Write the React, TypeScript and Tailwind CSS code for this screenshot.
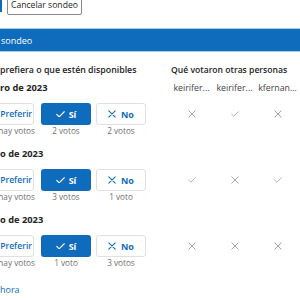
import React from "react";

const Check = ({ className = "", color = "currentColor", w = 10, sw = 1.6 }: { className?: string; color?: string; w?: number; sw?: number }) => (
  <svg width={w} height={w * 0.75} viewBox="0 0 12 9" className={className} fill="none">
    <path d="M1 4.6 L4.2 7.8 L11 1" stroke={color} strokeWidth={sw} strokeLinecap="round" strokeLinejoin="round" />
  </svg>
);

const Cross = ({ className = "", color = "currentColor", w = 9, sw = 1.4 }: { className?: string; color?: string; w?: number; sw?: number }) => (
  <svg width={w} height={w} viewBox="0 0 10 10" className={className} fill="none">
    <path d="M1 1 L9 9 M9 1 L1 9" stroke={color} strokeWidth={sw} strokeLinecap="round" />
  </svg>
);

type Row = {
  date: string;
  votes: [string, string, string];
  others: ("x" | "c")[];
  names?: boolean;
};

const rows: Row[] = [
  { date: "ro de 2023", votes: ["No hay votos", "2 votos", "2 votos"], others: ["x", "c", "x"], names: true },
  { date: "o de 2023", votes: ["No hay votos", "3 votos", "1 voto"], others: ["c", "x", "c"] },
  { date: "o de 2023", votes: ["No hay votos", "1 voto", "3 votos"], others: ["x", "x", "x"] },
];

const names = ["keirifer...", "keirifer...", "kfernan..."];

export default function App() {
  return (
    <div
      className="w-[300px] h-[300px] overflow-hidden bg-white relative"
      style={{ fontFamily: '"Open Sans", "Noto Sans", sans-serif' }}
    >
      {/* top buttons */}
      <div className="flex items-end h-[15px] overflow-hidden">
        <div className="w-[2px] h-[12px] self-start bg-[#0f6cbd]" />
        <div className="ml-[5px] h-[20px] px-[3px] border border-[#8a8a8a] rounded-[2px] flex items-center text-[8.6px] text-[#242424] leading-none">
          Cancelar sondeo
        </div>
      </div>

      {/* blue header */}
      <div className="mt-[13px] h-[24px] border-y border-[#a6cbee] bg-[#0f6cbd] flex items-center">
        <span className="text-white text-[9px] pl-[1px] leading-none">sondeo</span>
      </div>

      {/* headers */}
      <div className="mt-[12px] flex h-[12px] items-center">
        <div className="w-[170px] text-[8.8px] font-semibold text-[#242424] whitespace-nowrap leading-none">
          prefiera o que estén disponibles
        </div>
        <div className="pl-[1px] text-[8.6px] font-semibold text-[#242424] whitespace-nowrap leading-none">
          Qué votaron otras personas
        </div>
      </div>

      <div className="mt-[6px] flex flex-col gap-[11px]">
        {rows.map((r, i) => (
          <div key={i} className="flex flex-col">
            {/* date line */}
            <div className="flex h-[12px] items-center">
              <div className="w-[170px] text-[9.3px] font-bold text-[#242424] leading-none whitespace-nowrap">
                {r.date}
              </div>
              {r.names && (
                <div className="flex">
                  {names.map((n, j) => (
                    <div key={j} className="w-[43px] text-center text-[8.8px] text-[#424242] leading-none whitespace-nowrap">
                      {n}
                    </div>
                  ))}
                </div>
              )}
            </div>
            {/* buttons line */}
            <div className="mt-[9px] flex h-[22px] items-center">
              <div className="w-[170px] flex items-center">
                <div className="ml-[-20px] w-[54px] h-[22px] border border-[#e0e0e0] rounded-[3px] flex items-center justify-end pr-[1px] text-[8.6px] font-semibold text-[#0f6cbd] leading-none">
                  Preferir
                </div>
                <div className="ml-[7px] w-[50px] h-[22px] rounded-[3px] bg-[#0f6cbd] flex items-center justify-center gap-[4px] text-white text-[9px] font-bold leading-none">
                  <Check color="#ffffff" w={9} sw={1.5} />
                  <span>Sí</span>
                </div>
                <div className="ml-[5px] w-[50px] h-[22px] border border-[#e0e0e0] rounded-[3px] flex items-center justify-center gap-[5px] text-[#0f6cbd] text-[9px] font-bold leading-none">
                  <Cross color="#0f6cbd" w={8} sw={1.3} />
                  <span>No</span>
                </div>
              </div>
              <div className="flex">
                {r.others.map((o, j) => (
                  <div key={j} className="w-[43px] flex justify-center items-center">
                    {o === "x" ? <Cross color="#8f8f8f" w={8} sw={1} /> : <Check color="#8f8f8f" w={8} sw={1} />}
                  </div>
                ))}
              </div>
            </div>
            {/* votes line */}
            <div className="flex h-[12px] items-center text-[8.2px] text-[#707070] leading-none">
              <div className="ml-[-17px] w-[54px] text-center whitespace-nowrap">{r.votes[0]}</div>
              <div className="ml-[4px] w-[50px] text-center whitespace-nowrap">{r.votes[1]}</div>
              <div className="ml-[5px] w-[50px] text-center whitespace-nowrap">{r.votes[2]}</div>
            </div>
          </div>
        ))}
      </div>

      <div className="mt-[14px] h-[12px] flex items-center text-[9px] text-[#0f6cbd] leading-none">hora</div>
    </div>
  );
}
